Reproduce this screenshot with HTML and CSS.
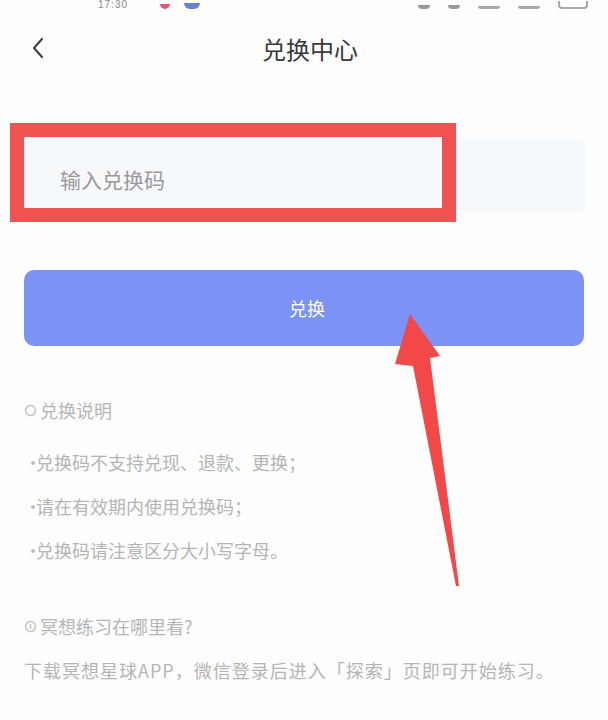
FILE: index.html
```html
<!DOCTYPE html>
<html lang="zh-CN">
<head>
    <meta charset="UTF-8">
    <meta name="viewport" content="width=device-width, initial-scale=1.0">
    <title>兑换中心</title>
    <link rel="stylesheet" href="styles.css">
</head>
<body>
    <div class="page">
        <!-- status bar, cropped at the top -->
        <div class="status">
            <div class="status-left">
                <span class="time">17:30</span>
                <span class="dot-red"></span>
                <span class="dot-blue"></span>
            </div>
            <div class="status-right">
                <span class="s-icon"></span>
                <span class="s-icon"></span>
                <span class="s-icon wide"></span>
                <span class="s-icon wide"></span>
                <span class="s-battery"></span>
            </div>
        </div>

        <header class="nav">
            <svg class="back" width="16" height="24" viewBox="0 0 16 24">
                <polyline points="12,3 4,12 12,21" fill="none" stroke="#444" stroke-width="2.2" stroke-linecap="round" stroke-linejoin="round"/>
            </svg>
            <h1>兑换中心</h1>
        </header>

        <div class="code-row">
            <input type="text" class="code-input" placeholder="输入兑换码">
            <div class="mark-box"></div>
        </div>

        <button class="redeem">兑换</button>

        <section class="notes">
            <p class="note-title">
                <svg width="13" height="13" viewBox="0 0 12 12"><circle cx="6" cy="6" r="4.6" fill="none" stroke="#c4c4c4" stroke-width="1.4"/></svg>
                兑换说明
            </p>
            <ul>
                <li>兑换码不支持兑现、退款、更换；</li>
                <li>请在有效期内使用兑换码；</li>
                <li>兑换码请注意区分大小写字母。</li>
            </ul>
            <p class="note-title second">
                <svg width="13" height="13" viewBox="0 0 12 12"><circle cx="6" cy="6" r="4.6" fill="none" stroke="#c4c4c4" stroke-width="1.4"/><line x1="6" y1="3.6" x2="6" y2="8.4" stroke="#c4c4c4" stroke-width="1.4"/></svg>
                冥想练习在哪里看?
            </p>
            <p class="note-text">下载冥想星球APP，微信登录后进入「探索」页即可开始练习。</p>
        </section>

        <!-- red annotation arrow -->
        <svg class="arrow" width="608" height="720" viewBox="0 0 608 720">
            <polygon points="410,314 440,356 430,358 459,586 456,586 413,366 395,364" fill="#f24848"/>
        </svg>
    </div>
</body>
</html>
```

FILE: styles.css
```css
body {
    margin: 0;
    background: #fdfdfd;
    font-family: "Noto Sans CJK SC", "Noto Sans", sans-serif;
    color: #333;
}

.page {
    position: relative;
    width: 608px;
    height: 720px;
    overflow: hidden;
}

/* status bar, only its lower edge is visible */
.status {
    height: 12px;
    display: flex;
    justify-content: space-between;
    align-items: flex-end;
    padding: 0 20px 0 98px;
}

.status-left,
.status-right {
    display: flex;
    align-items: flex-end;
    gap: 14px;
    margin-bottom: 3px;
}

.time {
    font-family: "Liberation Sans", sans-serif;
    font-size: 10px;
    line-height: 9px;
    color: #8a8a8a;
    letter-spacing: 1px;
}

.dot-red {
    width: 10px;
    height: 5px;
    border-radius: 0 0 5px 5px;
    background: #e25b74;
    margin-left: 18px;
}

.dot-blue {
    width: 16px;
    height: 6px;
    border-radius: 0 0 6px 6px;
    background: #6a7fd8;
}

.status-right {
    gap: 18px;
}

.s-icon {
    width: 12px;
    height: 4px;
    border-radius: 0 0 4px 4px;
    background: #999;
}

.s-icon.wide {
    width: 22px;
    height: 3px;
    background: #aaa;
}

.s-battery {
    width: 26px;
    height: 6px;
    border: 2px solid #aaa;
    border-top: none;
    border-radius: 0 0 4px 4px;
}

/* nav */
.nav {
    height: 72px;
    position: relative;
    display: flex;
    align-items: center;
    justify-content: center;
}

.back {
    position: absolute;
    left: 30px;
    top: 24px;
}

.nav h1 {
    margin: 0;
    font-size: 24px;
    font-weight: 400;
    color: #3a3a3a;
    padding-left: 12px;
}

/* code input */
.code-row {
    position: relative;
    margin: 55px 24px 0;
}

.code-input {
    display: block;
    box-sizing: border-box;
    width: 100%;
    height: 72px;
    border: none;
    border-radius: 8px;
    background: #f7f8fa;
    box-shadow: 0 1px 4px rgba(0, 0, 0, 0.04);
    padding: 8px 36px 0;
    font-family: inherit;
    font-size: 21px;
    color: #333;
    outline: none;
}

.code-input::placeholder {
    color: #9a9a9a;
}

.mark-box {
    position: absolute;
    left: -14px;
    top: -16px;
    width: 418px;
    height: 71px;
    border: 14px solid #f15252;
    pointer-events: none;
}

/* button */
.redeem {
    display: block;
    width: 560px;
    height: 76px;
    margin: 59px 24px 0;
    border: none;
    border-radius: 10px;
    background: #7b93f5;
    color: #fff;
    font-family: inherit;
    font-size: 18px;
    padding-left: 12px;
}

/* notes */
.notes {
    padding: 0 24px;
    color: #b5b5b5;
    font-size: 18px;
}

.note-title {
    margin: 52px 0 0;
    line-height: 24px;
    display: flex;
    align-items: center;
    gap: 3px;
}

.note-title.second {
    margin-top: 42px;
}

.notes ul {
    list-style: none;
    margin: 18px 0 0;
    padding: 0;
}

.notes li {
    line-height: 44px;
}

.notes li::before {
    content: "·";
    display: inline-block;
    width: 12px;
    color: #bbb;
}

.note-text {
    margin: 10px 0 0;
    line-height: 44px;
    letter-spacing: 1px;
}

.arrow {
    position: absolute;
    left: 0;
    top: 0;
    pointer-events: none;
}
```
